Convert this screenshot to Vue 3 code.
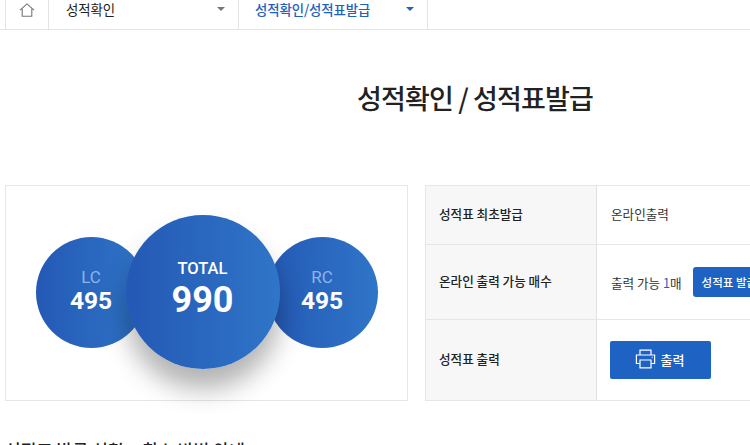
<script setup>
const rows = [
  { label: '성적표 최초발급', type: 'text' },
  { label: '온라인 출력 가능 매수', type: 'count' },
  { label: '성적표 출력', type: 'print' }
]
</script>

<template>
  <div class="page">
    <nav class="topbar">
      <div class="crumbs">
        <a class="home">
          <svg width="16" height="14" viewBox="0 0 16 14" fill="none" stroke="#777" stroke-width="1.1">
            <path d="M1 7.2 8 .9l7 6.3M3.2 5.8v7.4h9.6V5.8" />
          </svg>
        </a>
        <div class="crumb">
          <span>성적확인</span>
          <i class="arrow"></i>
        </div>
        <div class="crumb current">
          <span>성적확인/성적표발급</span>
          <i class="arrow"></i>
        </div>
      </div>
    </nav>

    <main class="content">
      <h1 class="title">성적확인 / 성적표발급</h1>

      <div class="summary">
        <div class="score-box">
          <div class="circle side">
            <span class="name">LC</span>
            <strong>495</strong>
          </div>
          <div class="circle total">
            <span class="name">TOTAL</span>
            <strong>990</strong>
          </div>
          <div class="circle side right">
            <span class="name">RC</span>
            <strong>495</strong>
          </div>
        </div>

        <div class="info">
          <div v-for="row in rows" :key="row.label" class="row" :class="row.type">
            <div class="label">{{ row.label }}</div>
            <div class="value">
              <template v-if="row.type === 'text'">온라인출력</template>
              <template v-else-if="row.type === 'count'">
                <span>출력 가능 <em>1</em>매</span>
                <button class="btn-small">성적표 발급</button>
              </template>
              <button v-else class="btn-print">
                <svg width="21" height="20" viewBox="0 0 21 20" fill="none" stroke="#fff" stroke-width="1.2">
                  <path d="M5 6V1.2h11V6M5 14.5H1.4V6h18.2v8.5H16" />
                  <path d="M5 11h11v7.8H5z" />
                  <path d="M16.8 8.4h.8" />
                </svg>
                <span>출력</span>
              </button>
            </div>
          </div>
        </div>
      </div>

      <h2 class="sub">성적표 발급 신청 · 취소 방법 안내</h2>
    </main>
  </div>
</template>

<style>
html,
body {
  margin: 0;
  overflow: hidden;
  background: #fff;
}
</style>

<style scoped>
.page {
  width: 750px;
  height: 445px;
  overflow: hidden;
  font-family: "Noto Sans CJK KR", "Noto Sans", sans-serif;
  color: #222;
}

.topbar {
  height: 29px;
  border-bottom: 1px solid #e4e4e4;
  padding-left: 5px;
}

.crumbs {
  display: flex;
  height: 29px;
}

.home {
  width: 43px;
  display: flex;
  align-items: center;
  justify-content: center;
  padding-bottom: 9px;
  border-left: 1px solid #e4e4e4;
  box-sizing: border-box;
}

.crumb {
  width: 190px;
  box-sizing: border-box;
  display: flex;
  align-items: center;
  justify-content: space-between;
  padding: 0 12px 11px 17px;
  border-left: 1px solid #e4e4e4;
  font-size: 13.4px;
  line-height: 16px;
  letter-spacing: -0.1px;
}

.crumb.current {
  padding-left: 16px;
  border-right: 1px solid #e4e4e4;
  color: #1f62bd;
  font-weight: 500;
}

.arrow {
  width: 0;
  height: 0;
  margin-right: 1px;
  border-style: solid;
  border-width: 4px 4px 0;
  border-color: #777 transparent transparent;
}

.current .arrow {
  border-top-color: #1f62bd;
}

.content {
  width: 940px;
  margin-left: 5px;
}

.title {
  margin: 48px 0 0;
  text-align: center;
  font-size: 27px;
  line-height: 40px;
  font-weight: 500;
  letter-spacing: -0.85px;
  color: #222;
}

.summary {
  display: flex;
  gap: 17px;
  margin-top: 67px;
}

.score-box {
  width: 403px;
  height: 216px;
  box-sizing: border-box;
  border: 1px solid #e6e6e6;
  display: flex;
  align-items: center;
  justify-content: center;
  padding-bottom: 1px;
}

.circle {
  flex: none;
  display: flex;
  flex-direction: column;
  align-items: center;
  justify-content: center;
  border-radius: 50%;
  background: linear-gradient(90deg, #2459b5, #2f75c8);
  color: #fff;
  font-family: Roboto, sans-serif;
}

.side {
  width: 111px;
  height: 111px;
  margin-right: -21px;
  padding-bottom: 4px;
  box-sizing: border-box;
}

.side.right {
  margin-left: -13px;
  margin-right: 0;
}

.side .name {
  font-size: 17px;
  line-height: 20px;
  color: #8cb4ee;
}

.side strong {
  font-size: 24.5px;
  line-height: 28px;
  font-weight: 700;
}

.total {
  width: 154px;
  height: 154px;
  margin-top: -2px;
  padding-bottom: 6px;
  box-sizing: border-box;
  position: relative;
  z-index: 1;
  box-shadow: 0 20px 26px rgba(0, 0, 0, 0.3);
}

.total .name {
  font-size: 16.5px;
  line-height: 22px;
  font-weight: 500;
}

.total strong {
  font-size: 36px;
  line-height: 40px;
  font-weight: 700;
}

.info {
  flex: 1;
  height: 216px;
  box-sizing: border-box;
  border-top: 1px solid #e6e6e6;
  border-bottom: 1px solid #e6e6e6;
  display: grid;
  grid-template-rows: 59px 75px 1fr;
  font-size: 12.6px;
}

.row {
  display: flex;
  border-bottom: 1px solid #e6e6e6;
}

.row:last-child {
  border-bottom: 0;
}

.label {
  width: 172px;
  box-sizing: border-box;
  display: flex;
  align-items: center;
  padding: 0 0 4px 13px;
  background: #f7f7f7;
  border-left: 1px solid #e6e6e6;
  border-right: 1px solid #e0e0e0;
  font-weight: 500;
}

.value {
  flex: 1;
  display: flex;
  align-items: center;
  padding-left: 14px;
  color: #333;
}

.row.text .value {
  padding-bottom: 4px;
}

.value em {
  font-style: normal;
  color: #1f62bd;
}

.btn-small {
  margin-left: 11px;
  width: 110px;
  height: 30px;
  border: 0;
  border-radius: 3px;
  background: #1e63c4;
  color: #fff;
  font: 500 11.5px "Noto Sans CJK KR", sans-serif;
  text-align: left;
  padding-left: 9px;
}

.btn-print {
  width: 101px;
  height: 38px;
  margin-left: -1px;
  border: 0;
  border-radius: 2px;
  background: #1e63c4;
  color: #fff;
  font: 500 13px "Noto Sans CJK KR", sans-serif;
  display: flex;
  align-items: center;
  justify-content: center;
  gap: 5px;
  padding: 0 2px 2px 0;
}

.sub {
  margin: 37px 0 0;
  font-size: 17px;
  line-height: 24px;
  font-weight: 500;
  letter-spacing: 0.2px;
  color: #222;
}
</style>
